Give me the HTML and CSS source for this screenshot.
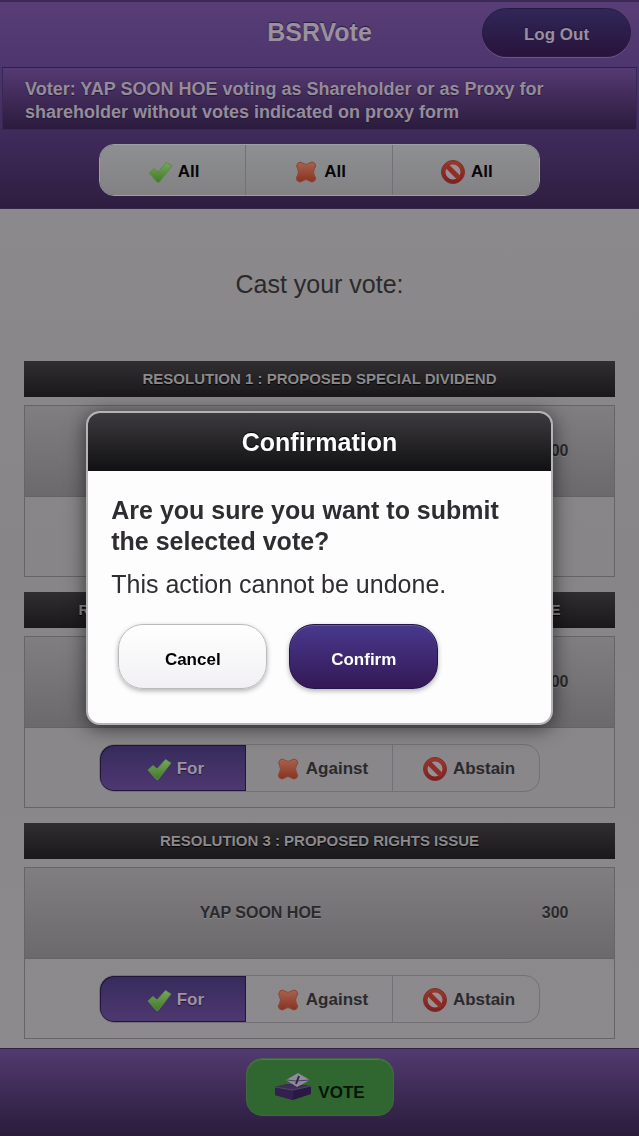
FILE: index.html
```html
<!DOCTYPE html>
<html lang="en">
<head>
  <meta charset="UTF-8" />
  <meta name="viewport" content="width=device-width, initial-scale=1.0"/>
  <title>BSRVote</title>
  <link rel="stylesheet" href="styles.css">
</head>
<body>

<!-- shared icons -->
<svg class="sprite" aria-hidden="true">
  <defs>
    <linearGradient id="green" x1="0" y1="0" x2="0" y2="1">
      <stop offset="0" stop-color="#78a75d"/><stop offset="1" stop-color="#3f7a26"/>
    </linearGradient>
    <linearGradient id="orange" x1="0" y1="0" x2="0" y2="1">
      <stop offset="0" stop-color="#a9634d"/><stop offset="1" stop-color="#873222"/>
    </linearGradient>
    <linearGradient id="red" x1="0" y1="0" x2="0" y2="1">
      <stop offset="0" stop-color="#98392f"/><stop offset="1" stop-color="#7d211f"/>
    </linearGradient>
  </defs>
  <symbol id="tick" viewBox="0 0 24 24">
    <path d="M1 13 L6 8.500 L10 12 L18.500 2.500 L24 6 L11 22.500 Q10 23 9 22 Z" fill="url(#green)" stroke="#5c8b44" stroke-width="1" stroke-linejoin="round"/>
  </symbol>
  <symbol id="cross" viewBox="0 0 24 24">
    <path d="M4 3 Q6.500 1 8.500 3 Q12 6 15.500 3 Q18 1 20.500 3 Q23 6 20.500 8.500 Q18.500 12 20.500 15.500 Q23 18.500 20.500 21 Q18 23 15.500 21 Q12 18 8.500 21 Q6.500 23 3.500 21 Q1 18.500 3.500 15.500 Q5.500 12 3.500 8.500 Q1.500 5.500 4 3 Z" fill="url(#orange)" stroke="#8c4634" stroke-width="1"/>
  </symbol>
  <symbol id="ban" viewBox="0 0 24 24">
    <circle cx="12" cy="12" r="9.500" fill="#979195" stroke="url(#red)" stroke-width="4"/>
    <path d="M5.500 5.500 L18.500 18.500" stroke="#8f2e26" stroke-width="5"/>
    <circle cx="12" cy="12" r="11.500" fill="none" stroke="#7b302b" stroke-width="1"/>
  </symbol>
</svg>

<header class="header">
  <div class="top-bar">
    <h1>BSRVote</h1>
    <button class="logout" type="button">Log Out</button>
  </div>
  <p class="voter">Voter: YAP SOON HOE voting as Shareholder or as Proxy for shareholder without votes indicated on proxy form</p>
  <div class="group all-group">
    <button type="button" aria-label="All for"><svg class="icon"><use href="#tick"/></svg>All</button>
    <button type="button" aria-label="All against"><svg class="icon"><use href="#cross"/></svg>All</button>
    <button type="button" aria-label="All abstain"><svg class="icon"><use href="#ban"/></svg>All</button>
  </div>
</header>

<main class="content">
  <p class="cast">Cast your vote:</p>

  <section class="resolution">
    <h2>RESOLUTION 1 : PROPOSED SPECIAL DIVIDEND</h2>
    <div class="panel">
      <table><tr><td class="name">YAP SOON HOE</td><td>300</td></tr></table>
      <div class="group">
        <label><input type="radio" name="r1" checked><svg class="icon"><use href="#tick"/></svg>For</label>
        <label><input type="radio" name="r1"><svg class="icon"><use href="#cross"/></svg>Against</label>
        <label><input type="radio" name="r1"><svg class="icon"><use href="#ban"/></svg>Abstain</label>
      </div>
    </div>
  </section>

  <section class="resolution">
    <h2>RESOLUTION 2 : PROPOSED RENEWAL OF THE SHARE MANDATE</h2>
    <div class="panel">
      <table><tr><td class="name">YAP SOON HOE</td><td>300</td></tr></table>
      <div class="group">
        <label><input type="radio" name="r2" checked><svg class="icon"><use href="#tick"/></svg>For</label>
        <label><input type="radio" name="r2"><svg class="icon"><use href="#cross"/></svg>Against</label>
        <label><input type="radio" name="r2"><svg class="icon"><use href="#ban"/></svg>Abstain</label>
      </div>
    </div>
  </section>

  <section class="resolution">
    <h2>RESOLUTION 3 : PROPOSED RIGHTS ISSUE</h2>
    <div class="panel">
      <table><tr><td class="name">YAP SOON HOE</td><td>300</td></tr></table>
      <div class="group">
        <label><input type="radio" name="r3" checked><svg class="icon"><use href="#tick"/></svg>For</label>
        <label><input type="radio" name="r3"><svg class="icon"><use href="#cross"/></svg>Against</label>
        <label><input type="radio" name="r3"><svg class="icon"><use href="#ban"/></svg>Abstain</label>
      </div>
    </div>
  </section>
</main>

<footer class="footer">
  <button class="vote" type="button">
    <svg class="ballot" viewBox="0 0 38 28" aria-hidden="true">
      <path d="M1 14 L13 11 L37 13 V21 L19 27 L1 22 Z" fill="#291a43"/>
      <path d="M1 14 L13 11 L37 13 L19 17 Z" fill="#3d2d57"/>
      <path d="M1 14 L19 17 V27 L1 22 Z" fill="#33204e"/>
      <path d="M1 14 L19 17 L37 13" fill="none" stroke="#554769" stroke-width="1"/>
      <path d="M12 7 L24 0 L36 7 L23 14 Z" fill="#8f8b9b"/>
      <path d="M13 7 L22 8 L36 7" fill="none" stroke="#4b3f61" stroke-width="1"/>
      <path d="M22 11 L25 3" fill="none" stroke="#30214c" stroke-width="2"/>
    </svg>
    <span>VOTE</span>
  </button>
</footer>

<div class="overlay">
  <div class="dialog" role="dialog" aria-labelledby="dialogTitle">
    <h2 id="dialogTitle">Confirmation</h2>
    <div class="dialog-body">
      <h3>Are you sure you want to submit the selected vote?</h3>
      <p>This action cannot be undone.</p>
      <div class="actions">
        <button class="cancel" type="button">Cancel</button>
        <button class="confirm" type="button">Confirm</button>
      </div>
    </div>
  </div>
</div>

</body>
</html>
```
FILE: styles.css
```css
* {
  box-sizing: border-box;
}

body {
  margin: 0;
  min-height: 100vh;
  display: flex;
  flex-direction: column;
  font-family: "Liberation Sans", Arial, sans-serif;
  color: #2b292c;
  background: linear-gradient(#8d8b8d, #878587 50%, #8d8b8e);
}

h1, h2, h3, p {
  margin: 0;
}

button {
  font-family: inherit;
  cursor: pointer;
}

.sprite {
  position: absolute;
  width: 0;
  height: 0;
}

/* header */
.header {
  padding-bottom: 12px;
  border-top: 2px solid #3b2953;
  border-bottom: 1px solid #34254b;
  background: linear-gradient(#593d76, #48326a 45%, #2f1d40);
}

.top-bar {
  display: grid;
  grid-template-columns: 1fr auto 1fr;
  align-items: center;
  height: 65px;
  padding: 0 8px 4px;
}

.top-bar h1 {
  grid-column: 2;
  font-size: 25px;
  color: #9a909e;
  text-shadow: 0 -1px 1px #2a1c3d;
}

.logout {
  justify-self: end;
  width: 149px;
  height: 49px;
  padding-top: 6px;
  border: 1px solid #281a3f;
  border-radius: 25px;
  font-size: 17px;
  font-weight: bold;
  color: #97909f;
  text-shadow: 0 -1px 1px #1e1434;
  background: linear-gradient(#302759, #28133b);
  box-shadow: 0 1px #6b5581;
}

.voter {
  margin: 0 2px;
  padding: 10px 22px 5px;
  border: 1px solid #392853;
  border-top-color: #2d2145;
  font-size: 18px;
  line-height: 23px;
  font-weight: bold;
  color: #958c9a;
  text-shadow: 0 1px 1px #241834;
  background: linear-gradient(#553a73, #2b1b3d);
}

/* three-part button rows */
.group {
  display: grid;
  grid-template-columns: repeat(3, 1fr);
  width: 75%;
  margin: 0 auto;
  overflow: hidden;
  border: 1px solid #737175;
  border-radius: 15px;
}

.group button,
.group label {
  display: flex;
  align-items: center;
  justify-content: center;
  gap: 6px;
  height: 46px;
  padding: 2px 0 0 6px;
  border: 0;
  border-right: 1px solid #737175;
  font-size: 17px;
  font-weight: bold;
  cursor: pointer;
}

.group > :last-child {
  border-right: 0;
}

.all-group {
  width: 69%;
  margin-top: 14px;
  border-color: #a09da3;
}

.group button {
  height: 50px;
  padding: 4px 0 0 2px;
  color: #070608;
  background: linear-gradient(#8e8f90, #828284);
}

.group input {
  position: absolute;
  opacity: 0;
}

.group label:has(input:checked) {
  color: #9d93a5;
  text-shadow: 0 1px 1px #211638;
  border-right-color: #21163a;
  border-radius: 14px 0 0 14px;
  background: linear-gradient(#362b5c, #4f3871);
  box-shadow: inset 1px 1px #21163a, inset 0 -1px #21163a;
}

.icon {
  width: 24px;
  height: 24px;
}

/* resolutions */
.content {
  padding: 0 24px 8px;
}

.cast {
  padding: 59px 0 61px;
  font-size: 25px;
  line-height: 32px;
  text-align: center;
}

.resolution {
  margin-bottom: 15px;
}

.resolution:last-child {
  margin-bottom: 0;
}

.resolution h2 {
  padding: 9px 0;
  margin-bottom: 8px;
  font-size: 15px;
  line-height: 18px;
  text-align: center;
  color: #8c8a8d;
  text-shadow: 0 1px 1px #000;
  background: linear-gradient(#302e31, #1a181b);
}

.panel {
  border: 1px solid #666467;
}

.panel table {
  width: 100%;
  height: 91px;
  border-collapse: collapse;
  table-layout: fixed;
  border-bottom: 1px solid #656366;
  background: linear-gradient(#807e81, #6b696c);
}

.panel td {
  padding: 0;
  font-size: 16px;
  font-weight: bold;
  text-align: center;
  text-shadow: 0 1px 0 #8a888b;
}

.panel .name {
  width: 80%;
}

.panel .group {
  margin: 16px auto 15px;
}

/* footer */
.footer {
  display: flex;
  justify-content: center;
  margin-top: auto;
  padding: 9px 0 20px;
  border-top: 1px solid #2f2145;
  background: linear-gradient(#523a70, #291c3b);
}

.vote {
  display: flex;
  align-items: center;
  justify-content: center;
  gap: 6px;
  width: 148px;
  height: 58px;
  padding: 0;
  border: 1px solid #466448;
  border-radius: 16px;
  font-size: 17px;
  font-weight: bold;
  color: #061507;
  background: #306630;
  box-shadow: inset 0 1px #488048;
}

.vote span {
  padding-top: 12px;
}

.ballot {
  width: 38px;
  height: 28px;
}

/* confirmation dialog */
.overlay {
  position: fixed;
  inset: 0;
  display: flex;
  align-items: center;
  justify-content: center;
}

.dialog {
  width: 73%;
  overflow: hidden;
  border: 2px solid #b5b3b6;
  border-radius: 14px;
  background: #fefdfe;
  box-shadow: 0 3px 20px rgba(0, 0, 0, 0.6);
}

.dialog h2 {
  padding: 15px 0 14px;
  font-size: 25px;
  line-height: 29px;
  text-align: center;
  color: #fff;
  text-shadow: 0 -1px 1px #000;
  background: linear-gradient(#3c3a3e, #111012);
}

.dialog-body {
  padding: 24px 23px 34px;
  color: #2f2d31;
}

.dialog h3 {
  font-size: 25px;
  line-height: 31px;
}

.dialog p {
  margin-top: 12px;
  font-size: 25px;
  line-height: 31px;
}

.actions {
  display: flex;
  gap: 22px;
  margin-top: 24px;
  padding-left: 7px;
}

.actions button {
  width: 149px;
  height: 65px;
  padding-top: 8px;
  border: 1px solid #bbb9bd;
  border-radius: 25px;
  font-size: 17px;
  font-weight: bold;
  box-shadow: 0 2px 5px rgba(0, 0, 0, 0.3);
}

.cancel {
  color: #000;
  background: linear-gradient(#fff, #f1eff3);
}

.actions .confirm {
  border-color: #24144a;
  color: #fff;
  background: linear-gradient(#48398d, #341856);
  box-shadow: inset 0 1px #6657a0, 0 2px 5px rgba(0, 0, 0, 0.3);
}
```
